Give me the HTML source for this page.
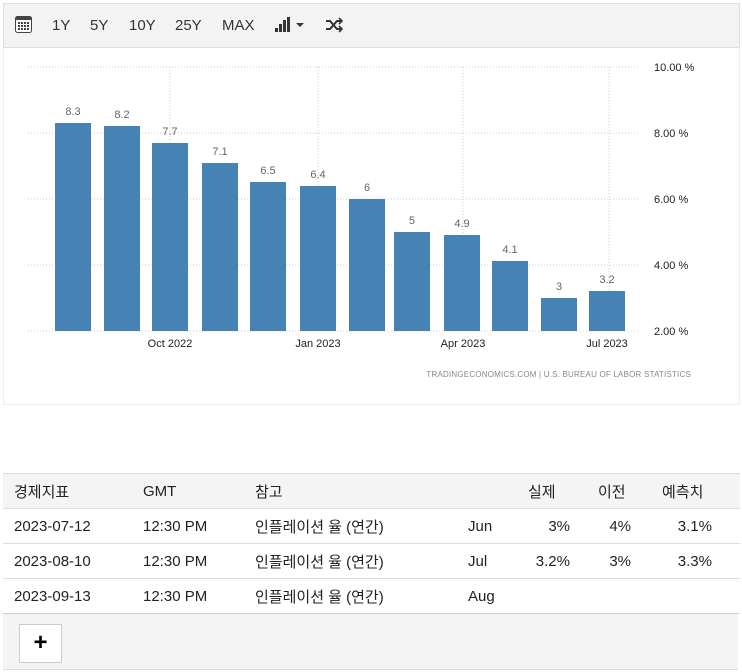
<!DOCTYPE html>
<html><head><meta charset="utf-8"><style>
body{margin:0;width:742px;height:672px;background:#fff;font-family:"Liberation Sans","Noto Sans CJK KR",sans-serif;position:relative;overflow:hidden}
.tb{position:absolute;left:3px;top:3px;width:735px;height:43px;background:#f3f3f3;border:1px solid #ddd}
.tb span{position:absolute;top:13px;font-size:15px;color:#333}
.chart{position:absolute;left:3px;top:47px;width:735px;height:357px;border:1px solid #eee;border-top:none}
svg text{font-family:"Liberation Sans",sans-serif}
table{position:absolute;left:3px;top:473px;width:737px;border-collapse:collapse;font-size:15px;color:#222;table-layout:fixed}
td{height:34px;border-bottom:1px solid #ddd;padding:0;white-space:nowrap;overflow:hidden}
tr.h td{background:#f4f4f4;border-top:1px solid #ddd}
.r{text-align:right}
.ft{position:absolute;left:3px;top:613px;width:735px;height:55px;background:#f4f4f4;border-top:1px solid #ccc;border-bottom:1px solid #ddd}
.btn{position:absolute;left:16px;top:10px;width:41px;height:37px;background:#fff;border:1px solid #ccc;font-size:24px;font-weight:bold;text-align:center;line-height:35px}
</style></head><body>
<div class="tb">
<svg style="position:absolute;left:11px;top:12px" width="17" height="17" viewBox="0 0 17 17"><rect x="0.5" y="0.5" width="16" height="16" rx="2" fill="#fff" stroke="#444"/><rect x="1" y="1" width="15" height="3" fill="#444"/><g fill="#444"><rect x="3" y="6" width="2" height="2"/><rect x="6" y="6" width="2" height="2"/><rect x="9" y="6" width="2" height="2"/><rect x="12" y="6" width="2" height="2"/><rect x="3" y="9" width="2" height="2"/><rect x="6" y="9" width="2" height="2"/><rect x="9" y="9" width="2" height="2"/><rect x="12" y="9" width="2" height="2"/><rect x="3" y="12" width="2" height="2"/><rect x="6" y="12" width="2" height="2"/><rect x="9" y="12" width="2" height="2"/><rect x="12" y="12" width="2" height="2"/></g></svg>
<span style="left:48px">1Y</span><span style="left:86px">5Y</span><span style="left:125px">10Y</span><span style="left:171px">25Y</span><span style="left:218px">MAX</span>
<svg style="position:absolute;left:271px;top:13px" width="34" height="16"><rect x="0" y="11" width="3" height="4" fill="#333"/><rect x="4" y="7" width="3" height="8" fill="#333"/><rect x="8" y="3" width="3" height="12" fill="#333"/><rect x="12" y="0" width="3" height="15" fill="#333"/><path d="M21 6h8l-4 4z" fill="#333"/></svg>
<svg style="position:absolute;left:321px;top:13px" width="18" height="16" viewBox="0 0 18 16" fill="none" stroke="#333" stroke-width="2"><path d="M1 4h4l7 8h4M1 12h4l7-8h4"/><path d="M14 1l3 3-3 3M14 9l3 3-3 3" stroke-width="1.6"/></svg>
</div>
<div class="chart">
<svg width="735" height="357" style="position:absolute;left:0;top:0">
<g transform="translate(-4,-47)">
<g stroke="#ccc" stroke-dasharray="1,2"><line x1="28" x2="640" y1="67" y2="67"/><line x1="28" x2="640" y1="133" y2="133"/><line x1="28" x2="640" y1="199" y2="199"/><line x1="28" x2="640" y1="265" y2="265"/><line x1="28" x2="640" y1="331" y2="331"/>
<line x1="170" x2="170" y1="67" y2="331"/><line x1="318" x2="318" y1="67" y2="331"/><line x1="463" x2="463" y1="67" y2="331"/><line x1="609" x2="609" y1="67" y2="331"/></g>
<g fill="#4682b4">
<rect x="55" y="123" width="36" height="208"/><rect x="104" y="126" width="36" height="205"/><rect x="152" y="143" width="36" height="188"/><rect x="202" y="163" width="36" height="168"/><rect x="250" y="182" width="36" height="149"/><rect x="300" y="186" width="36" height="145"/><rect x="349" y="199" width="36" height="132"/><rect x="394" y="232" width="36" height="99"/><rect x="444" y="235" width="36" height="96"/><rect x="492" y="261" width="36" height="70"/><rect x="541" y="298" width="36" height="33"/><rect x="589" y="291" width="36" height="40"/></g>
<g fill="#666" font-size="11" text-anchor="middle">
<text x="73" y="115">8.3</text><text x="122" y="118">8.2</text><text x="170" y="135">7.7</text><text x="220" y="155">7.1</text><text x="268" y="174">6.5</text><text x="318" y="178">6.4</text><text x="367" y="191">6</text><text x="412" y="224">5</text><text x="462" y="227">4.9</text><text x="510" y="253">4.1</text><text x="559" y="290">3</text><text x="607" y="283">3.2</text></g>
<g fill="#222" font-size="11"><text x="654" y="71">10.00 %</text><text x="654" y="137">8.00 %</text><text x="654" y="203">6.00 %</text><text x="654" y="269">4.00 %</text><text x="654" y="335">2.00 %</text></g>
<g fill="#222" font-size="11" text-anchor="middle"><text x="170" y="347">Oct 2022</text><text x="318" y="347">Jan 2023</text><text x="463" y="347">Apr 2023</text><text x="607" y="347">Jul 2023</text></g>
<text x="691" y="377" font-size="8" fill="#888" text-anchor="end" letter-spacing="0.2">TRADINGECONOMICS.COM | U.S. BUREAU OF LABOR STATISTICS</text>
</g></svg>
</div>
<table>
<colgroup><col style="width:140px"><col style="width:112px"><col style="width:213px"><col style="width:42px"><col style="width:65px"><col style="width:61px"><col></colgroup>
<tr class="h"><td style="padding-left:11px">경제지표</td><td>GMT</td><td>참고</td><td></td><td style="padding-left:18px">실제</td><td style="padding-left:23px">이전</td><td style="padding-left:26px">예측치</td></tr>
<tr><td style="padding-left:11px">2023-07-12</td><td>12:30 PM</td><td>인플레이션 율 (연간)</td><td>Jun</td><td class="r" style="padding-right:5px">3%</td><td class="r" style="padding-right:5px">4%</td><td class="r" style="padding-right:28px">3.1%</td></tr>
<tr><td style="padding-left:11px">2023-08-10</td><td>12:30 PM</td><td>인플레이션 율 (연간)</td><td>Jul</td><td class="r" style="padding-right:5px">3.2%</td><td class="r" style="padding-right:5px">3%</td><td class="r" style="padding-right:28px">3.3%</td></tr>
<tr><td style="padding-left:11px">2023-09-13</td><td>12:30 PM</td><td>인플레이션 율 (연간)</td><td>Aug</td><td></td><td></td><td></td></tr>
</table>
<div class="ft"><div class="btn">+</div></div>
</body></html>
